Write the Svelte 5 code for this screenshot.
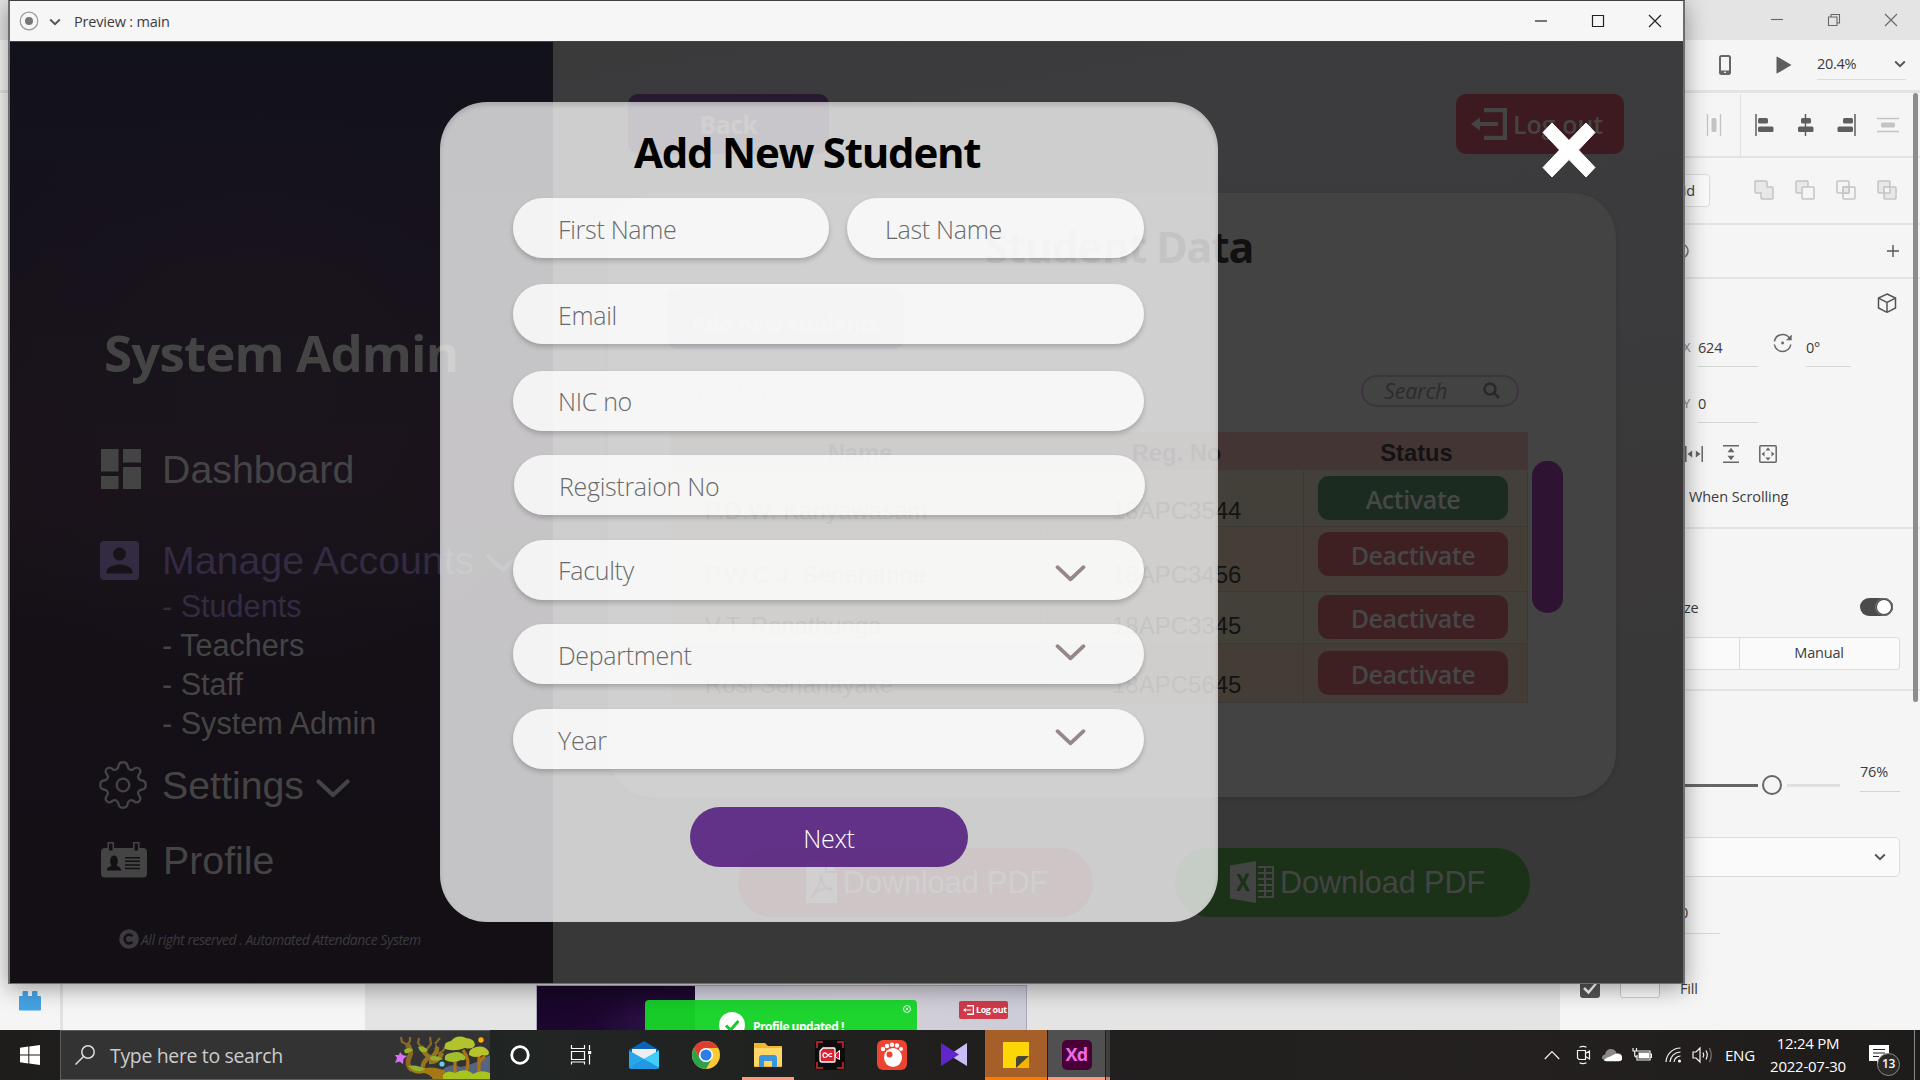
<script>
  const students = [
    { name: 'P.D.W. Kariyawasam', reg: '18APC3544', action: 'Activate' },
    { name: 'P.W.C.J. Senarathne', reg: '18APC3456', action: 'Deactivate' },
    { name: 'V.T. Ranathunga', reg: '18APC3345', action: 'Deactivate' },
    { name: 'Rosi Senanayake', reg: '18APC5645', action: 'Deactivate' }
  ];
  const fields = [
    { label: 'Email', kind: 'loose' },
    { label: 'NIC no', kind: 'regular' },
    { label: 'Registraion No', kind: 'regular shifted' },
    { label: 'Faculty', kind: 'regular low', menu: true },
    { label: 'Department', kind: 'regular', menu: true },
    { label: 'Year', kind: 'regular last-row', menu: true }
  ];
</script>

{#snippet chevron(cls)}
  <svg class="chev {cls}" viewBox="0 0 34 19"><path d="M2.5 2.5 17 16 31.5 2.5" /></svg>
{/snippet}

{#snippet small()}
  <svg class="smallchev" viewBox="0 0 12 8"><path d="M1.2 1.5 6 6.2 10.8 1.5" /></svg>
{/snippet}

{#snippet exit()}
  <svg class="exit" viewBox="0 0 36 32">
    <path d="M13 2H34V30H13" fill="none" stroke="currentColor" stroke-width="4.4" />
    <path d="M0 16 9 9.5V14H27V18H9V22.5Z" fill="currentColor" />
  </svg>
{/snippet}

<div class="desktop">
  <!-- Design application behind the preview window -->
  <div class="xd">
    <header class="xd-title">
      <svg viewBox="0 0 14 14"><path d="M1 6.5H13" /></svg>
      <svg viewBox="0 0 14 14"><path d="M1.5 4H10V12.5H1.5ZM4 4V1.5H12.5V10H10" /></svg>
      <svg viewBox="0 0 14 14"><path d="M1 1 13 13M13 1 1 13" /></svg>
    </header>
    <div class="xd-tools">
      <svg class="phone" viewBox="0 0 12 20"><rect x="1" y="1" width="10" height="18" rx="1.5" fill="none" stroke="#666" stroke-width="2" /><path d="M1 15.5H11V19H1Z" fill="#666" /><rect x="5.2" y="16.7" width="1.6" height="1.3" fill="#fff" /></svg>
      <svg class="play" viewBox="0 0 16 18"><path d="M.5 1V17Q.5 17.8 1.3 17.3L15.5 9 1.3.7Q.5.3.5 1Z" fill="#5e5e5e" /></svg>
      <div class="zoomlevel"><span>20.4%</span>{@render small()}</div>
    </div>
    <div class="xd-body">
      <div class="rail">
        <svg viewBox="0 0 22 20"><path d="M1 5H3.500V1Q3.500 0 4.500 0H8Q9 0 9 1V5H13V1Q13 0 14 0H17.500Q18.500 0 18.500 1V5H21Q22 5 22 6V18.500Q22 19.500 21 19.500H1Q0 19.500 0 18.500V6Q0 5 1 5Z" fill="#45a3e3" /></svg>
      </div>
      <div class="assets"></div>
      <div class="canvas">
        <div class="artboard">
          <div class="ab-left"></div>
          <div class="ab-right"><span class="ab-logout">{@render exit()}Log out</span></div>
          <div class="toast">
            <svg class="tick" viewBox="0 0 26 26"><circle cx="13" cy="13" r="13" fill="#fff" /><path d="M7 13.500 11.500 18 19.500 9" fill="none" stroke="#19c92a" stroke-width="3" /></svg>
            <span>Profile updated !</span>
            <svg class="toast-x" viewBox="0 0 8 8"><circle cx="4" cy="4" r="3.500" /><path d="M2.600 2.600 5.400 5.400M5.400 2.600 2.600 5.400" /></svg>
          </div>
        </div>
      </div>
      <aside class="inspector">
        <section class="align">
          <svg class="pale" viewBox="0 0 22 22"><path d="M4.500 0V22M17.500 0V22" stroke-width="1.300" /><rect x="8.500" y="4" width="5" height="14" rx="1.500" /></svg>
          <div class="align-main">
            <svg viewBox="0 0 22 22"><path d="M2 0V22" stroke-width="1.500" /><rect x="4" y="4" width="10" height="5.500" rx="1.500" /><rect x="4" y="12.500" width="15.500" height="5.500" rx="1.500" /></svg>
            <svg viewBox="0 0 22 22"><path d="M10.500 0V22" stroke-width="1.500" /><rect x="6" y="4" width="10" height="5.500" rx="1.500" /><rect x="3" y="12.500" width="15.500" height="5.500" rx="1.500" /></svg>
            <svg viewBox="0 0 22 22"><path d="M19 0V22" stroke-width="1.500" /><rect x="7" y="4" width="10" height="5.500" rx="1.500" /><rect x="1.500" y="12.500" width="15.500" height="5.500" rx="1.500" /></svg>
            <svg class="pale" viewBox="0 0 22 22"><path d="M0 4.500H22M0 17.500H22" stroke-width="1.300" /><rect x="4" y="8.500" width="14" height="5" rx="1.500" /></svg>
          </div>
        </section>
        <section class="bools">
          <span class="gridbtn">id</span>
          <svg viewBox="0 0 20 20"><path class="f" d="M1.500 1H12Q13 1 13 2V7H18Q19 7 19 8V18Q19 19 18 19H8Q7 19 7 18V13H2Q1 13 1 12V1.500Z" /></svg>
          <svg viewBox="0 0 20 20"><rect class="f" x="1" y="1" width="12" height="12" rx="1" /><rect class="w" x="7" y="7" width="12" height="12" rx="1" /></svg>
          <svg viewBox="0 0 20 20"><rect x="1" y="1" width="12" height="12" rx="1" /><rect x="7" y="7" width="12" height="12" rx="1" /><rect class="f" x="7" y="7" width="6" height="6" /></svg>
          <svg viewBox="0 0 20 20"><rect class="f" x="1" y="1" width="12" height="12" rx="1" /><rect class="f" x="7" y="7" width="12" height="12" rx="1" /><rect class="w" x="7" y="7" width="6" height="6" /></svg>
        </section>
        <section class="comp">
          <svg class="ring" viewBox="0 0 16 16"><circle cx="8" cy="8" r="7" /></svg>
          <svg class="plus" viewBox="0 0 12 12"><path d="M6 0V12M0 6H12" /></svg>
        </section>
        <section class="transform">
          <svg class="cube" viewBox="0 0 20 20"><path d="M10 1 18.500 5V15L10 19.300 1.500 15V5ZM1.500 5.200 10 9.500 18.500 5.200M10 9.500V19" /></svg>
          <div class="coords">
            <i>X</i><span class="num">624</span>
            <svg class="rot" viewBox="0 0 20 20"><path d="M1.500 8.500A8.300 8.300 0 0 1 16.500 5M1.400 11.500A8.300 8.300 0 0 0 17.800 11.500" /><path d="M18.700 1.500V7.200H13Z" class="solid" /><circle cx="9.600" cy="10" r="1.400" class="solid" /></svg>
            <span class="num deg">0°</span>
          </div>
          <div class="coords second"><i>Y</i><span class="num">0</span></div>
          <div class="sizers">
            <svg viewBox="0 0 18 18"><path d="M.8 1V17M17.200 1V17" /><path class="solid" d="M2.500 9 7.200 5.500V12.500ZM15.500 9 10.800 5.500V12.500Z" /></svg>
            <svg viewBox="0 0 18 18"><path d="M1 .8H17M1 17.200H17" /><path class="solid" d="M9 2.800 12.500 7.200H5.500ZM9 15.200 12.500 10.800H5.500Z" /></svg>
            <svg viewBox="0 0 18 18"><rect x=".8" y=".8" width="16.400" height="16.400" rx="1" /><path class="solid" d="M9 2.600 11.500 5.500H6.500ZM9 15.400 11.500 12.500H6.500ZM2.600 9 5.500 6.500V11.500ZM15.400 9 12.500 6.500V11.500Z" /></svg>
          </div>
          <p class="scrolling">When Scrolling</p>
        </section>
        <section class="resize">
          <div class="resize-head"><span>ze</span><span class="toggle"><b></b></span></div>
          <div class="segmented"><span></span><span>Manual</span></div>
        </section>
        <section class="look">
          <div class="slider">
            <span class="done"></span><span class="knob"></span><span class="rest"></span>
            <span class="num pct">76%</span>
          </div>
          <div class="blend">{@render small()}</div>
          <div class="corner"><span>0</span></div>
          <div class="fillrow">
            <span class="check"><svg viewBox="0 0 20 20"><path d="M4 10 8.500 14.500 16 5.500" /></svg></span>
            <span class="swatch"></span><span>Fill</span>
          </div>
        </section>
        <div class="scrollbar"></div>
      </aside>
    </div>
  </div>

  <!-- Preview window -->
  <div class="preview">
    <header class="pv-title">
      <svg class="target" viewBox="0 0 20 20"><circle cx="10" cy="10" r="8.800" /><circle class="dot" cx="10" cy="10" r="4" /></svg>
      {@render small()}
      <span>Preview : main</span>
      <div class="pv-buttons">
        <svg viewBox="0 0 14 14"><path d="M1 7H13" /></svg>
        <svg viewBox="0 0 14 14"><path d="M1.500 1.500H12.500V12.500H1.500Z" /></svg>
        <svg viewBox="0 0 14 14"><path d="M1 1 13 13M13 1 1 13" /></svg>
      </div>
    </header>
    <div class="page">
      <nav class="sidebar">
        <h1>System Admin</h1>
        <div class="item dash">
          <svg viewBox="0 0 40 40"><path d="M0 0H17.500V22.500H0ZM22 0H40V13.500H22ZM0 27H17.500V40H0ZM22 18H40V40H22Z" /></svg>
          <span>Dashboard</span>
        </div>
        <div class="item manage">
          <svg viewBox="0 0 39 39"><path fill-rule="evenodd" d="M4 0H35Q39 0 39 4V35Q39 39 35 39H4Q0 39 0 35V4Q0 0 4 0ZM19.500 6.500A6.500 6.500 0 1 0 19.500 19.500 6.500 6.500 0 1 0 19.500 6.500ZM6.500 32.500H32.500V30.500C32.500 26 24 23.500 19.500 23.500S6.500 26 6.500 30.500Z" /></svg>
          <span>Manage Accounts</span>{@render chevron('')}
        </div>
        <ul>
          <li class="on">- Students</li>
          <li>- Teachers</li>
          <li>- Staff</li>
          <li>- System Admin</li>
        </ul>
        <div class="item settings">
          <svg viewBox="-24 -24 48 48">
            <path fill="none" stroke="#444" stroke-width="2.300" stroke-linejoin="round" d="M-4.500-19C-4-24 4-24 4.500-19C5-15.500 8-14 10.500-16C15-19.500 19.500-15 16-10.500C14-8 15.500-5 19-4.500C24-4 24 4 19 4.500C15.500 5 14 8 16 10.500C19.500 15 15 19.500 10.500 16C8 14 5 15.500 4.500 19C4 24-4 24-4.500 19C-5 15.500-8 14-10.500 16C-15 19.500-19.500 15-16 10.500C-14 8-15.500 5-19 4.500C-24 4-24-4-19-4.500C-15.500-5-14-8-16-10.500C-19.500-15-15-19.500-10.500-16C-8-14-5-15.500-4.500-19Z" />
            <circle r="6.300" fill="none" stroke="#444" stroke-width="2.300" />
          </svg>
          <span>Settings</span>{@render chevron('')}
        </div>
        <div class="item profile">
          <svg viewBox="0 0 46 36">
            <path fill-rule="evenodd" d="M4 6H6.500V0H13V6H32V0H38.500V6H42Q46 6 46 10V32Q46 35.500 42 35.500H4Q0 35.500 0 32V10Q0 6 4 6ZM8 1.500V8.500H11.500V1.500ZM33.500 1.500V8.500H37V1.500ZM6 28.500H20C20 25 17.500 25 15.500 23.500C18 20 17 13.500 13 13.500S8 20 10.500 23.500C8.500 25 6 25 6 28.500ZM24 15V16.500H39V15ZM24 18.600V20.100H39V18.600ZM24 22.200V23.700H39V22.200ZM24 25.800V27.300H39V25.800Z" />
          </svg>
          <span>Profile</span>
        </div>
        <footer>
          <svg viewBox="0 0 20 20"><circle cx="10" cy="10" r="9.800" fill="#3c3a3f" /><path d="M13.500 7.300A4.400 4.400 0 1 0 13.500 12.700" fill="none" stroke="#141016" stroke-width="2.600" /></svg>
          <em>All right reserved . Automated Attendance System</em>
        </footer>
      </nav>

      <main>
        <div class="topbar">
          <button class="back">Back</button>
          <button class="logout">{@render exit()}<span>Log out</span></button>
        </div>
        <div class="card">
          <h2>Student Data</h2>
          <button class="addnew">Add new students</button>
          <div class="filters">
            <div class="entries">Show <span>10 {@render small()}</span> entries</div>
            <div class="search"><em>Search</em><svg viewBox="0 0 18 18"><circle cx="7" cy="7" r="5.500" /><path d="M11 11 16 16" /></svg></div>
          </div>
          <div class="listing">
            <div class="table">
              <div class="tr head"><b>Name</b><b>Reg. No</b><b>Status</b></div>
              {#each students as s, i}
                <div class="tr row{i}">
                  <span class="name">{s.name}</span>
                  <span class="reg">{s.reg}</span>
                  <span class="status"><button class:go={s.action === 'Activate'}>{s.action}</button></span>
                </div>
              {/each}
            </div>
            <div class="thumb"></div>
          </div>
        </div>
        <div class="downloads">
          <button class="pdf">
            <svg viewBox="0 0 31 42"><path d="M0 0H19V12H31V42H0ZM21 0 31 10H21Z" fill="#444" /><path d="M6 36C8 30 14 26 14.500 17C14 14 17 14 16 19C16 24 22 30 26 29C28 26 14 27 9 32C6 36 4 37 6 36Z" fill="none" stroke="#3d1520" stroke-width="1.600" /></svg>
            <span>Download PDF</span>
          </button>
          <button class="xls">
            <svg viewBox="0 0 44 42"><path fill-rule="evenodd" d="M0 4.500 26 0V42L0 37.500ZM6.500 13 11 21.500 6.200 30H10L13 24 16 30H20L15.200 21.500 19.500 12.500H15.700L13 18.500 10.300 13Z" fill="#444" /><path d="M28 6H43V36H28M28 12H43M28 18H43M28 24H43M28 30H43M35 6V36" fill="none" stroke="#444" stroke-width="2" /></svg>
            <span>Download PDF</span>
          </button>
        </div>
      </main>

      <div class="modal">
        <h2>Add New Student</h2>
        <div class="names"><label class="field first">First Name</label><label class="field last">Last Name</label></div>
        {#each fields as f}
          <label class="field {f.kind}">{f.label}{#if f.menu}{@render chevron('brown')}{/if}</label>
        {/each}
        <button class="next">Next</button>
      </div>
      <svg class="dismiss" viewBox="0 0 54 56"><path d="M10 1 27 18.500 44 1 53 10.500 36.500 28 53 45.500 44 55 27 37.500 10 55 1 45.500 17.500 28 1 10.500Z" fill="#fff" stroke="#fff" stroke-linejoin="round" /></svg>
    </div>
  </div>

  <!-- Taskbar -->
  <div class="taskbar">
    <span class="start"><svg viewBox="0 0 20 20"><path fill="#fff" d="M0 2.800 8.300 1.600V9.500H0ZM9.300 1.500 20 0V9.500H9.300ZM0 10.500H8.300V18.400L0 17.200ZM9.300 10.500H20V20L9.300 18.500Z" /></svg></span>
    <div class="tsearch">
      <svg class="lens" viewBox="0 0 20 20"><circle cx="13" cy="7" r="6.200" /><path d="M8.500 11.500.500 19.500" /></svg>
      <span>Type here to search</span>
      <svg class="trees" viewBox="0 0 95 44">
        <path d="M46 35Q55 26 66 31Q80 28 95 19V44H46Z" fill="#56657f" />
        <path d="M17 34Q11 29 14 22Q18 15 12 8" fill="none" stroke="#8a6a22" stroke-width="5" />
        <path d="M13 9 7 6 6 1M12 9 15 5 15 1M27 12 23 7 24 2M32 13 36 8 35 1M43 17 41 9M40 8 45 2M43 18 48 15 50 11" fill="none" stroke="#85682a" stroke-width="2.200" />
        <path d="M28 32Q27 27 34 21Q27 15 26 10M34 24Q43 17 42 11M34 26Q44 26 47 17" fill="none" stroke="#96731f" stroke-width="4.500" />
        <path d="M13 31Q19 37 29 32Q41 30 50 35Q54 39 53 44H38Q37 39 29 37Q18 40 13 31Z" fill="#a37916" />
        <path d="M68 14Q76 24 71 37M60 21V37M84 20V42M84 26 90 20" fill="none" stroke="#ac7414" stroke-width="3.200" />
        <path d="M50 13Q48 6 56 5Q62-2 71 2Q80 3 80 9Q78 14 70 12Q60 16 50 13Z" fill="#b3c32d" />
        <path d="M50 24Q48 18 56 17Q65 14 70 20Q72 25 66 24Q58 28 50 24Z" fill="#a3be2b" />
        <path d="M74 19Q73 13 81 11Q90 9 94 16Q94 21 88 19Q80 23 74 19Z" fill="#b4c42a" />
        <path d="M48 44V39Q53 33 60 37Q70 31 78 38Q86 33 95 37V44Z" fill="#a7c41f" />
        <path d="M23 11Q29 9 33 14 31 18 25 15ZM13 30Q22 28 30 33 26 37 18 34ZM35 21Q41 18 48 23 42 26 36 24ZM9 14Q14 10 18 14 14 18 10 17Z" fill="#93b32c" />
        <path d="M5 16 7.500 19 12 20 8.500 23 8 28 4.500 25.500 0 27 2 22 0 19 4 19Z" fill="#dc6ff2" />
        <circle cx="86" cy="4" r="2.700" fill="#ffac0c" /><circle cx="47" cy="28" r="2.600" fill="#62cfe8" />
      </svg>
    </div>
    <span class="app cortana"><svg viewBox="0 0 30 30"><circle cx="15" cy="15" r="8.300" fill="none" stroke="#fff" stroke-width="2.800" /></svg></span>
    <span class="app tasks"><svg viewBox="0 0 30 30"><path d="M5.500 5V8.500H18.500V5M5.500 11.500H18.500V19.500H5.500ZM5.500 24.500V22H18.500V24.500M23.500 5V10M23.500 15V24.500" fill="none" stroke="#fff" stroke-width="1.200" /><rect x="22" y="11" width="3.200" height="3.200" fill="#fff" /></svg></span>
    <span class="app"><svg viewBox="0 0 30 30"><path d="M0 10 15 1 30 10V15H0Z" fill="#0b63b5" /><path d="M3 9H27V22H3Z" fill="#eee" /><path d="M0 10.500 15 19 30 10.500V27Q30 29 28 29H2Q0 29 0 27Z" fill="#2aa5ea" /><path d="M15 19 30 10.500V27.500Z" fill="#42cef7" /><path d="M0 28 15 19 30 28 28 29H2Z" fill="#1c8fdd" opacity=".6" /></svg></span>
    <span class="app"><svg viewBox="0 0 30 30"><circle cx="15" cy="15" r="14" fill="#fcc934" /><path d="M15 1A14 14 0 0 1 27.200 8H15A7 7 0 0 0 9 18.500L2.900 8A14 14 0 0 1 15 1Z" fill="#e03c31" /><path d="M2.900 8A14 14 0 0 0 15 29L21 18.500A7 7 0 0 1 9 18.500Z" fill="#2da24c" /><circle cx="15" cy="15" r="7" fill="#fff" /><circle cx="15" cy="15" r="5.500" fill="#2f7de9" /></svg></span>
    <span class="app open"><svg viewBox="0 0 30 30"><path d="M1 3H12L15 6H29V27H1Z" fill="#f0b92c" /><path d="M1 8H29V26H1Z" fill="#ffd768" /><path d="M6 27V18Q6 15 9 15H21Q24 15 24 18V27H19V21H11V27Z" fill="#3a95dc" /></svg></span>
    <span class="app"><svg viewBox="0 0 30 30"><rect width="30" height="30" rx="4" fill="#0c0c0d" /><path d="M2 8V2H8M22 2H28V8M28 22V28H22M8 28H2V22" fill="none" stroke="#d42a33" stroke-width="1.500" /><path d="M8 8H19Q20 8 20 9.500V21Q20 22 19 22H7Q5 22 5 20V11Z" fill="#d9222f" stroke="#fff" stroke-width="1.300" /><path d="M20.500 14 24.500 10.500V19.500L20.500 17Z" fill="#d9222f" stroke="#fff" /><path d="M17 13.700C14.500 11.500 12.500 17.600 10 17.500C7.300 17.300 7.300 13 10 12.900C12.500 13 14 18.300 17 16.300" fill="none" stroke="#fff" stroke-width="1.200" /></svg></span>
    <span class="app"><svg viewBox="0 0 30 30"><rect width="30" height="30" rx="6" fill="#ec4430" /><ellipse cx="16" cy="17.500" rx="9" ry="9.500" fill="#fff" /><circle cx="12.500" cy="14.500" r="3" fill="#ec4430" /><circle cx="6" cy="9" r="2.200" fill="#fff" /><circle cx="10" cy="6" r="2.200" fill="#fff" /><circle cx="15" cy="4.700" r="2.200" fill="#fff" /><circle cx="20" cy="5.500" r="2.200" fill="#fff" /><circle cx="24" cy="9" r="2" fill="#fff" /></svg></span>
    <span class="app vs"><svg viewBox="0 0 30 30"><path d="M28 3V26L10 15Z" fill="#cdbdf7" /><path d="M2 3 20 14.500 2 26Z" fill="#6025cb" /></svg></span>
    <span class="app notes"><svg viewBox="0 0 30 30"><path d="M2 2H28V28H2Z" fill="#fdd608" /><path d="M28 16V28H15Z" fill="#f4b400" /><path d="M15 28V19Q15 16 18 16H28Z" fill="#484438" /></svg></span>
    <span class="app xdapp"><b>Xd</b></span>
    <span class="stack"></span>
    <div class="tray">
      <svg class="up" viewBox="0 0 16 10"><path d="M.8 9 8 1.500 15.200 9" /></svg>
      <svg class="meet" viewBox="0 0 16 20"><path d="M1.500 5.500H9.500V14.500H3L1.500 13ZM9.500 8.500 13.500 6V14L9.500 11.500M3.500 2.200Q7 .4 10.500 2.200M3.500 17.800Q7 19.600 10.500 17.800" /></svg>
      <svg class="cloud" viewBox="0 0 20 14"><path d="M3 12Q0 12 0 9.500T3 6.500Q4 1 9 1Q13 1 14.500 5Q20 5 20 9T17 13H4Z" fill="#8a8988" stroke="none" /><path d="M2 12.500Q3 10 7 9L13 6Q19 5 20 9T17 13.300H4Z" fill="#fff" stroke="none" /></svg>
      <svg class="battery" viewBox="0 0 20 16"><path d="M5 4H18V13H5V8M18 7H19.500V10.500H18" /><rect x="6.500" y="5.500" width="10.500" height="6" fill="#fff" stroke="none" /><path d="M1 1V4H4.500V1M2.700 4V8Q2.700 10 5 10" /></svg>
      <svg class="wifi" viewBox="0 0 17 16"><path d="M1 15A14.500 14.500 0 0 1 15.500 1M5 15A10.500 10.500 0 0 1 15.500 5M9 15A6.500 6.500 0 0 1 15.500 9" /><circle cx="14.500" cy="14" r="1.500" fill="#fff" stroke="none" /></svg>
      <svg class="sound" viewBox="0 0 21 18"><path d="M1 6H4L8 2V16L4 12H1ZM11 6.500Q12.500 9 11 11.500M14 4.500Q16.500 9 14 13.500" /><path d="M17.500 2Q21 9 17.500 16" stroke="#777" /></svg>
      <span class="lang">ENG</span>
      <div class="clock"><span>12:24 PM</span><span>2022-07-30</span></div>
      <div class="notice"><svg viewBox="0 0 20 20"><path d="M0 0H20V16H12L8 20V16H0Z" fill="#fff" /><path d="M4 4.500H16M4 8H16M4 11.500H10" stroke="#222" /></svg><b>13</b></div>
      <i class="peek"></i>
    </div>
  </div>
</div>

<style>
  :global(body) { margin: 0; overflow: hidden; }
  .desktop { position: relative; width: 1920px; height: 1080px; overflow: hidden; background: #e4e4e4; font-family: "Open Sans", "Noto Sans", sans-serif; color: #3c3c3c; }
  .desktop * { box-sizing: border-box; }
  svg { display: block; flex: none; }
  button { border: 0; padding: 0; font: inherit; color: inherit; }
  .smallchev { width: 12px; height: 8px; fill: none; stroke: #555; stroke-width: 2; }

  /* design application */
  .xd { height: 1030px; display: flex; flex-direction: column; }
  .xd-title { height: 40px; flex: none; display: flex; justify-content: flex-end; align-items: center; gap: 43px; padding-right: 22px; }
  .xd-title svg { width: 14px; height: 14px; fill: none; stroke: #666; stroke-width: 1.1; }
  .xd-tools { height: 53px; flex: none; display: flex; justify-content: flex-end; align-items: center; background: #f5f5f5; border-bottom: 3px solid #e3e3e3; padding-right: 14px; }
  .phone { width: 12px; height: 20px; margin-right: 45px; }
  .play { width: 16px; height: 18px; margin-right: 25px; }
  .zoomlevel { width: 89px; height: 30px; display: flex; justify-content: space-between; align-items: center; border-bottom: 1px solid #dcdcdc; font-size: 14.5px; letter-spacing: -.3px; padding-bottom: 2px; }
  .xd-body { flex: 1; min-height: 0; display: flex; }
  .rail { width: 63px; background: #f5f5f5; border-right: 3px solid #e2e2e2; padding: 898px 0 0 19px; }
  .rail svg { width: 22px; height: 20px; }
  .assets { width: 302px; background: #f5f5f5; }
  .canvas { width: 1195px; padding: 892px 0 0 171px; overflow: hidden; }
  .artboard { position: relative; width: 491px; height: 60px; display: flex; border: 1px solid #aab; }
  .ab-left { width: 158px; background: radial-gradient(ellipse 60px 30px at 75% 60%, #2c1146, transparent), linear-gradient(165deg, #190729 20%, #1d0630 50%, #231243); }
  .ab-right { flex: 1; background: linear-gradient(100deg, #ced0dd, #d5cfd9 50%, #cbcdd8); display: flex; justify-content: flex-end; align-items: flex-start; padding: 15px 18px; }
  .ab-logout { width: 49px; height: 18px; border-radius: 2px; background: #d03a4a; color: #fff; font: bold 9px/18px "Open Sans", sans-serif; letter-spacing: -.4px; display: flex; align-items: center; gap: 2px; padding-left: 4px; white-space: nowrap; }
  .ab-logout .exit { width: 11px; height: 10px; }
  .toast { position: absolute; left: 108px; top: 14px; width: 272px; height: 50px; border-radius: 4px; color: #fff; display: flex; font: bold 12px/28px "Open Sans", sans-serif; letter-spacing: -.5px; padding: 12px 0 0 74px; background: linear-gradient(90deg, #17cb29 50px, #1ed530 50px); }
  .tick { width: 26px; height: 26px; margin-right: 8px; }
  .toast span { margin-top: 1px; white-space: nowrap; }
  .toast-x { width: 8px; height: 8px; margin: -7px 6px 0 auto; fill: none; stroke: #fff; stroke-width: .9; }

  .inspector { position: relative; width: 360px; background: #f5f5f5; font-size: 14.5px; letter-spacing: -.2px; }
  .inspector section { border-bottom: 2px solid #e3e3e3; }
  .align { height: 65px; display: flex; align-items: center; justify-content: flex-end; gap: 15px; }
  .align svg { width: 22px; height: 22px; fill: #5e5e5e; stroke: #5e5e5e; stroke-width: 0; }
  .align .pale { fill: #c4c4c4; stroke: #c4c4c4; }
  .align-main { height: 62px; display: flex; align-items: center; gap: 19px; border-left: 1px solid #e0e0e0; padding: 0 21px 0 13px; }
  .bools { height: 67px; display: flex; align-items: center; justify-content: flex-end; gap: 21px; padding: 0 23px 2px 0; }
  .bools svg { width: 20px; height: 20px; fill: none; stroke: #c4c4c4; stroke-width: 1.5; }
  .bools .f { fill: #e8e8e8; }
  .bools .w { fill: #f5f5f5; }
  .gridbtn { width: 70px; height: 33px; margin: 2px 23px 0 0; border: 1px solid #dcdcdc; border-radius: 4px; background: #fafafa; text-align: right; padding-right: 14px; line-height: 31px; }
  .comp { height: 54px; display: flex; align-items: center; justify-content: space-between; padding: 0 21px 0 113px; }
  .ring { width: 16px; height: 16px; fill: none; stroke: #777; stroke-width: 1.5; }
  .plus { width: 12px; height: 12px; stroke: #555; stroke-width: 1.4; }
  .transform { height: 250px; padding-top: 14px; }
  .cube { width: 20px; height: 20px; margin-left: 317px; fill: none; stroke: #555; stroke-width: 1.5; }
  .coords { display: flex; align-items: flex-end; height: 54px; padding-left: 123px; }
  .coords.second { height: 56px; }
  .coords i { font-style: normal; width: 15px; height: 34px; line-height: 29px; color: #888; font-size: 13px; }
  .num { width: 60px; height: 34px; line-height: 29px; border-bottom: 1px solid #d5d5d5; }
  .second .num { line-height: 30px; }
  .rot { width: 20px; height: 20px; margin: 0 13px 14px 15px; fill: none; stroke: #666; stroke-width: 1.5; }
  .solid { fill: #666; stroke: none; }
  .deg { width: 45px; }
  .sizers { display: flex; gap: 19px; padding: 22px 0 0 125px; }
  .sizers svg { width: 18px; height: 18px; fill: none; stroke: #666; stroke-width: 1.5; }
  .scrolling { margin: 24px 0 0 129px; line-height: 20px; letter-spacing: -.08px; }
  .resize { height: 162px; padding: 66px 20px 0 0; }
  .resize-head { display: flex; justify-content: space-between; padding: 0 7px 0 124px; line-height: 25px; height: 24px; }
  .toggle { width: 33px; height: 18px; margin-top: 3px; border-radius: 9px; background: #4b4b4b; display: flex; justify-content: flex-end; }
  .toggle b { width: 18px; height: 18px; border-radius: 50%; border: 2.5px solid #4b4b4b; background: #fff; outline: 1px solid #777; outline-offset: -1px; }
  .segmented { margin-top: 18px; height: 33px; display: flex; border: 1px solid #dcdcdc; border-radius: 3px; background: #fafafa; line-height: 30px; text-align: center; }
  .segmented span:first-child { width: 179px; border-right: 1px solid #dcdcdc; }
  .segmented span:last-child { flex: 1; padding-right: 1px; }
  .look { padding-top: 67px; border: 0 !important; }
  .slider { display: flex; align-items: center; height: 34px; padding-left: 100px; }
  .done { width: 98px; height: 3px; margin-top: 20px; background: #666; }
  .knob { width: 20px; height: 20px; margin: 20px 5px 0 4px; border: 2.5px solid #666; border-radius: 50%; }
  .rest { width: 53px; height: 3px; margin-top: 20px; background: #e0e0e0; }
  .pct { width: 40px; margin-left: 20px; line-height: 27px; }
  .blend { margin: 45px 20px 0 0; height: 40px; border: 1px solid #dcdcdc; border-radius: 5px; background: #fafafa; display: flex; justify-content: flex-end; align-items: center; padding-right: 13px; }
  .corner { width: 160px; height: 57px; border-bottom: 1px solid #d8d8d8; text-align: right; padding: 26px 32px 0 0; line-height: 20px; }
  .fillrow { display: flex; margin-top: 44px; padding-left: 20px; line-height: 22px; }
  .check { width: 20px; height: 20px; border-radius: 3px; background: #555; }
  .check svg { fill: none; stroke: #fff; stroke-width: 2.5; }
  .swatch { width: 40px; height: 20px; margin: 0 20px 0 20px; background: #fff; border: 1px solid #ccc; border-radius: 3px; }
  .scrollbar { position: absolute; right: 2px; top: 0; width: 5px; height: 609px; border-radius: 3px; background: #8d8d8d; }

  /* preview window */
  .preview { position: absolute; left: 8px; top: 0; width: 1677px; height: 984px; border: 1px solid #6d6d70; border-top-color: #3f3f3f; border-width: 1px 2px; box-shadow: 0 4px 22px rgba(0, 0, 0, .38); display: flex; flex-direction: column; }
  .pv-title { height: 40px; flex: none; background: #f6f6f6; display: flex; align-items: center; font-size: 14.5px; letter-spacing: -.2px; padding: 0 21px 0 9px; }
  .target { width: 20px; height: 20px; margin-right: 10px; fill: none; stroke: #999; stroke-width: 1.2; }
  .target .dot { fill: #777; stroke: none; }
  .pv-title .smallchev { margin: 2px 13px 0 0; }
  .pv-buttons { margin-left: auto; display: flex; gap: 43px; }
  .pv-buttons svg { width: 14px; height: 14px; fill: none; stroke: #222; stroke-width: 1.2; }
  .page { position: relative; flex: 1; min-height: 0; display: flex; border-top: 1px solid #3a4450; background: #3a3a3b; overflow: hidden; }

  .sidebar { width: 543px; flex: none; padding: 280px 0 0 89px; background: radial-gradient(ellipse 330px 300px at 45% 38%, #1a141d, transparent), linear-gradient(180deg, #12121b 0, #16111a 25%, #1b131a 46%, #151017 62%, #130f15 100%); color: #444; font-family: "Liberation Sans", Arial, sans-serif; }
  h1 { margin: 0 0 63px 5px; font: bold 51px/60px "Open Sans", sans-serif; letter-spacing: -.85px; white-space: nowrap; }
  .item { height: 48px; display: flex; align-items: center; font-size: 39.3px; line-height: 48px; white-space: nowrap; }
  .item > svg:first-child { fill: #444; }
  .dash > svg { width: 40px; height: 40px; margin: 0 21px 0 2px; }
  .manage { margin-top: 43px; color: #342a42; }
  .item.manage > svg:first-child { width: 39px; height: 39px; margin: 0 23px 0 1px; fill: #342a42; }
  .chev { width: 34px; height: 19px; fill: none; stroke: currentColor; stroke-width: 4.2; stroke-linecap: round; stroke-linejoin: round; }
  .item .chev { margin: 7px 0 0 12px; }
  ul { list-style: none; margin: 3px 0 0 63px; padding: 0; font-size: 30.6px; line-height: 39px; }
  .on { color: #342a42; }
  .settings { margin-top: 18px; }
  .settings > svg:first-child { width: 48px; height: 48px; margin: 0 15px 1px 0; }
  .profile { margin-top: 27px; }
  .profile > svg { width: 46px; height: 36px; margin: 0 16px 1px 2px; }
  footer { display: flex; align-items: center; gap: 2px; margin: 46px 0 0 20px; height: 20px; color: #3c3a3f; font: 14px/24px "Open Sans", sans-serif; letter-spacing: -.48px; white-space: nowrap; }
  footer svg { width: 20px; height: 20px; margin-bottom: 2px; }

  main { flex: 1; min-width: 0; padding: 52px 0 0 55px; background: linear-gradient(170deg, #3a3a3b, #3c3c3f 14%, #3b3a3c 40%, #3a3838 65%, #383838 80%); }
  .topbar { display: flex; justify-content: space-between; margin: 0 59px 0 20px; }
  .back { width: 201px; height: 60px; border-radius: 10px; background: #271a30; color: #444; font: bold 25px/60px "Open Sans", sans-serif; letter-spacing: -.5px; }
  .logout { width: 168px; height: 60px; border-radius: 10px; background: #3d1a1f; color: #444; display: flex; align-items: center; gap: 6px; padding: 0 0 1px 15px; font-size: 25px; font-weight: 600; letter-spacing: 0; }
  .exit { width: 36px; height: 32px; }
  .card { width: 1008px; height: 604px; margin-top: 39px; padding-top: 28px; border-radius: 44px; background: #434343; box-shadow: 0 2px 5px rgba(0, 0, 0, .12); }
  .card h2 { margin: 0 0 0 377px; font: bold 43px/52px "Open Sans", sans-serif; letter-spacing: -1.3px; color: #111; }
  .addnew { display: block; width: 237px; height: 60px; margin: 16px 0 0 59px; border-radius: 10px; background: #271c38; color: #444; font: bold 22px/60px "Open Sans", sans-serif; letter-spacing: -.6px; white-space: nowrap; padding-top: 4px; }
  .filters { display: flex; justify-content: space-between; margin: 26px 97px 0 69px; height: 32px; }
  .entries { display: flex; align-items: center; gap: 6px; font-size: 23px; color: #393939; letter-spacing: -.6px; }
  .entries span { width: 103px; height: 30px; border: 2px solid #3f3c42; border-radius: 10px; display: flex; align-items: center; justify-content: space-around; }
  .search { width: 158px; height: 32px; border: 2px solid #3d343f; border-radius: 16px; display: flex; align-items: center; justify-content: space-between; padding: 0 16px 0 21px; font-size: 21.5px; letter-spacing: -.2px; line-height: 28px; color: #2c2c2c; }
  .search svg { width: 18px; height: 18px; fill: none; stroke: #292929; stroke-width: 2.6; }
  .listing { display: flex; gap: 4px; margin: 25px 0 0 63px; }
  .table { width: 857px; font: 24px/24px "Liberation Sans", Arial, sans-serif; color: #131313; }
  .tr { display: grid; grid-template-columns: 377px 256px 224px; background: #434039; border-bottom: 1px solid #3c3833; }
  .tr > * { border-right: 1px solid #3d3833; }
  .head { height: 38px; background: #423533; text-align: center; line-height: 43px; font-size: 23.7px; }
  .head b { padding-left: 2px; }
  .row0 { height: 57px; }
  .row1 { height: 65px; background: #443e37; }
  .row2 { height: 52px; }
  .row3 { height: 59px; background: #443d36; }
  .name, .reg { display: flex; align-items: flex-end; padding: 0 0 4px 34px; }
  .reg { padding-left: 64px; }
  .row0 .name, .row0 .reg { padding-bottom: 3px; }
  .row2 .name, .row2 .reg, .row3 .name, .row3 .reg { padding-bottom: 5px; }
  .status { padding: 6px 0 0 14px; }
  .row1 .status { padding-top: 5px; }
  .row2 .status { padding-top: 3px; }
  .row3 .status { padding-top: 7px; }
  .status button { width: 190px; height: 44px; border-radius: 11px; background: #3e2023; color: #474747; font: 600 25px/47px "Open Sans", sans-serif; letter-spacing: -.4px; display: block; }
  .status .go { background: #1c2b20; }
  .thumb { width: 31px; height: 152px; margin-top: 29px; border-radius: 15px; background: #2f1333; }
  .downloads { display: flex; gap: 82px; margin: 51px 0 0 130px; }
  .downloads button { width: 355px; height: 69px; border-radius: 34px; display: flex; align-items: center; padding-bottom: 1px; color: #444; font: 30.5px/68px "Liberation Sans", Arial, sans-serif; }
  .pdf { background: #3d1520; padding-left: 68px !important; gap: 6px; }
  .pdf svg { width: 31px; height: 42px; }
  .xls { background: #1b3219; padding-left: 55px !important; gap: 6px; }
  .xls svg { width: 44px; height: 42px; }

  .modal { position: absolute; left: 430px; top: 60px; width: 778px; height: 820px; border-radius: 47px; background: rgba(252, 252, 252, .76); box-shadow: inset 0 3px 5px rgba(0, 0, 0, .14); padding: 25px 74px 0 73px; color: #6a6a6a; font-size: 25px; font-weight: 300; letter-spacing: -.3px; }
  .modal h2 { margin: 0 0 21px 121px; font: bold 42px/50px "Open Sans", sans-serif; letter-spacing: -1.25px; color: #000; white-space: nowrap; }
  .names { display: flex; gap: 18px; }
  .field { display: flex; justify-content: space-between; height: 60px; border-radius: 30px; background: rgba(255, 255, 255, .8); box-shadow: 0 3px 5px rgba(0, 0, 0, .2); padding: 0 58px 0 45px; line-height: 62px; }
  .first { width: 316px; line-height: 63px; }
  .last { width: 297px; padding-left: 38px; line-height: 63px; }
  .loose { margin-top: 26px; line-height: 63px; }
  .loose + .regular { margin-top: 27px; line-height: 61px; }
  .regular { margin-top: 25px; }
  .regular.shifted { margin: 24px -1px 0 1px; }
  .brown { width: 31px; height: 17px; margin-top: 20px; color: #968888; }
  .low { line-height: 61px; }
  .low .brown { margin-top: 25px; }
  .low + .regular { margin-top: 24px; }
  .next { display: block; width: 278px; height: 60px; margin: 38px 0 0 177px; border-radius: 30px; background: rgba(91, 41, 131, .95); color: #fff; line-height: 62px; letter-spacing: -.3px; }
  .dismiss { position: absolute; left: 1532px; top: 80px; width: 54px; height: 56px; }

  /* taskbar */
  .taskbar { position: relative; height: 50px; display: flex; background: linear-gradient(90deg, #1e1d1b, #212523 28%, #201f1e 50%, #242020 78%, #1e1c1b); color: #fff; }
  .start { width: 60px; padding: 15px 20px; }
  .start svg { width: 20px; height: 20px; }
  .tsearch { width: 430px; border: 1px solid #5d5d5d; border-right-width: 0; background: #333; display: flex; align-items: center; overflow: hidden; color: #ccc; font-size: 19.5px; letter-spacing: -.35px; }
  .lens { width: 20px; height: 20px; margin: 0 15px 0 14px; fill: none; stroke: #ddd; stroke-width: 1.5; }
  .trees { width: 95px; height: 44px; margin: 5px 0 0 auto; }
  .app { width: 62px; height: 50px; flex: none; display: flex; align-items: center; justify-content: center; }
  .app svg { width: 30px; height: 30px; }
  .cortana { margin-left: -1px; }
  .tasks { width: 59px; }
  .tasks + .app { margin-left: 3px; }
  .open { border-bottom: 3px solid #ff9a78; width: 52px; margin: 0 5px; padding-top: 3px; }
  .vs svg { margin-right: 1px; }
  .notes { background: #a75f2a; border-bottom: 3px solid #ff7800; padding-top: 3px; }
  .xdapp { width: 57px; background: #505050; border-bottom: 3px solid #ff9a78; padding-top: 3px; margin-left: 1px; }
  .xdapp b { width: 30px; height: 30px; border-radius: 5px; background: #470137; color: #f368e8; text-align: center; font-size: 18px; line-height: 28px; letter-spacing: -.8px; }
  .stack { width: 4px; margin-left: 1px; background: #3e3e3e; border-bottom: 3px solid #d08068; }
  .tray { margin-left: auto; display: flex; align-items: center; font-size: 15px; letter-spacing: -.25px; }
  .tray svg { fill: none; stroke: #f2f2f2; stroke-width: 1.2; }
  .up { width: 16px; height: 10px; margin-right: 16px; }
  .meet { width: 16px; height: 20px; margin-right: 10px; }
  .cloud { width: 20px; height: 14px; margin-right: 10px; }
  .battery { width: 20px; height: 16px; margin-right: 13px; }
  .wifi { width: 17px; height: 16px; margin-right: 10px; }
  .sound { width: 21px; height: 18px; margin-right: 12px; }
  .lang { width: 44px; }
  .clock { width: 78px; display: flex; flex-direction: column; align-items: center; line-height: 23px; white-space: nowrap; }
  .notice { position: relative; width: 20px; height: 20px; margin: 0 25px 0 22px; }
  .notice svg { width: 20px; height: 20px; stroke: none; }
  .notice b { position: absolute; left: 8px; top: 8px; width: 23px; height: 23px; border: 1px solid #8a8a8a; border-radius: 50%; background: #2b2a29; text-align: center; font: 600 12px/20px "Open Sans", sans-serif; }
  .peek { width: 6px; height: 50px; border-left: 1px solid #888; }
</style>
